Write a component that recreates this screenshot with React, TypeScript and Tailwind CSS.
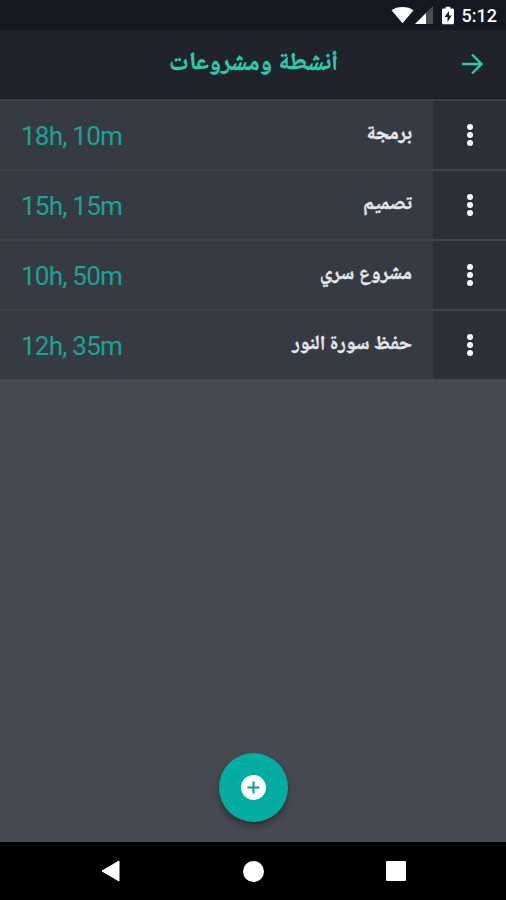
const activities = [
  { name: 'برمجة', time: '18h, 10m' },
  { name: 'تصميم', time: '15h, 15m' },
  { name: 'مشروع سري', time: '10h, 50m' },
  { name: 'حفظ سورة النور', time: '12h, 35m' },
];

function StatusBar() {
  return (
    <div className="flex h-[30px] shrink-0 items-center justify-end bg-[#16181f] pr-[9px] text-white">
      <svg className="mr-[1px] h-[18px] w-[23px]" viewBox="0 0 24 18" fill="currentColor">
        <path d="M12 17.5 .5 4.1C3.3 1.8 7.4 .6 12 .6s8.7 1.2 11.5 3.5z" />
      </svg>
      <svg className="mr-[9px] h-[18px] w-[18px]" viewBox="0 0 18 18">
        <path d="M0 18 18 0v18z" fill="#4b4e53" />
        <path d="M0 18 11 7v11z" fill="#fff" />
      </svg>
      <svg className="mr-[8px] h-[19px] w-[12px]" viewBox="0 0 13 19">
        <path d="M4 0h5v2h2.500q1.500 0 1.500 1.500v14q0 1.500-1.500 1.500h-10Q0 19 0 17.500v-14Q0 2 1.500 2H4z" fill="#fff" />
        <path d="M7.500 4.500 2.800 11H6v5.500L10.500 9.500H7.500z" fill="#16181f" />
      </svg>
      <span className="pt-[2px] text-[18px] leading-none font-medium">5:12</span>
    </div>
  );
}

function Header() {
  return (
    <header className="flex h-[69px] shrink-0 items-center justify-between border-b border-[#181d25] bg-[#20232c] pr-[23px] pl-[169px] text-[#2bcbae]">
      <h1 dir="rtl" className="font-['Noto_Naskh_Arabic_UI','DejaVu_Sans',sans-serif] text-[24.700px] leading-none font-bold whitespace-nowrap [-webkit-text-stroke:0.4px]">أنشطة ومشروعات</h1>
      <svg className="h-[22px] w-[22px]" viewBox="0 0 22 22" fill="none" stroke="currentColor" strokeWidth="2.300">
        <path d="M1 11h19M11 1.500l9.500 9.500-9.500 9.500" />
      </svg>
    </header>
  );
}

function ActivityRow({ name, time }: { name: string; time: string }) {
  return (
    <li className="flex h-[70px] border-t-2 border-[#3e4149]">
      <div className="flex flex-1 items-center justify-between bg-[#363b43] pr-[21px] pl-[21px]">
        <span className="pt-[1px] text-[26px] leading-none tracking-[-0.750px] text-[#1fa197]">{time}</span>
        <span dir="rtl" className="font-['Noto_Naskh_Arabic_UI','DejaVu_Sans',sans-serif] text-[20px] leading-none font-bold text-[#e4e6ea] [-webkit-text-stroke:0.4px]">{name}</span>
      </div>
      <button aria-label="Menu" className="flex w-[73px] flex-col items-center justify-center gap-[2px] bg-[#2c2f38]">
        <i className="size-[6px] rounded-full bg-white" />
        <i className="size-[6px] rounded-full bg-white" />
        <i className="size-[6px] rounded-full bg-white" />
      </button>
    </li>
  );
}

export default function App() {
  return (
    <div className="flex h-[900px] w-[506px] flex-col overflow-hidden bg-[#464951] font-['Roboto','DejaVu_Sans',sans-serif]">
      <StatusBar />
      <Header />
      <ul>
        {activities.map((a) => (
          <ActivityRow key={a.name} {...a} />
        ))}
      </ul>
      <main className="flex flex-1 items-end justify-center pb-[20px] pl-[1px]">
        <button aria-label="Add" className="flex size-[69px] items-center justify-center rounded-full bg-[#05aca2] shadow-[0_4px_7px_rgba(0,0,0,0.35)]">
          <svg className="size-[25px]" viewBox="0 0 25 25">
            <circle cx="12.500" cy="12.500" r="12.500" fill="#fff" />
            <path d="M12.500 6.500v12M6.500 12.500h12" stroke="#05a096" strokeWidth="2" />
          </svg>
        </button>
      </main>
      <nav className="flex h-[58px] shrink-0 items-center justify-between bg-black pr-[100px] pl-[101px]">
        <svg className="h-[22px] w-[19px]" viewBox="0 0 19 22">
          <path d="M1 11 18 1v20z" fill="#fff" stroke="#fff" strokeLinejoin="round" />
        </svg>
        <i className="size-[21px] rounded-full bg-white" />
        <i className="size-[20px] rounded-[1px] bg-white" />
      </nav>
    </div>
  );
}
